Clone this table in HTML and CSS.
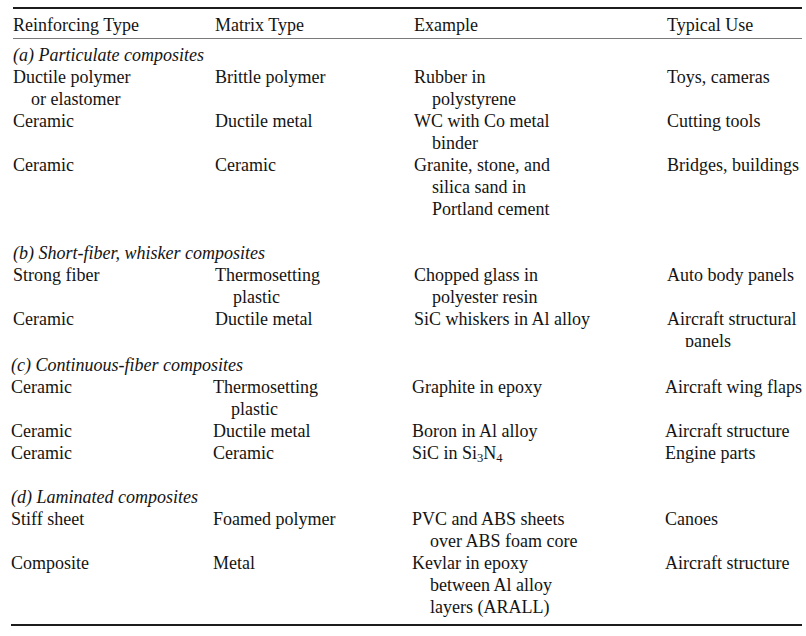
FILE: index.html
```html
<!DOCTYPE html>
<html>
<head>
<meta charset="utf-8">
<link rel="stylesheet" href="styles.css">
</head>
<body>
<div class="table">
  <div class="rule-thick"></div>
  <div class="row head">
    <div>Reinforcing Type</div>
    <div>Matrix Type</div>
    <div>Example</div>
    <div>Typical Use</div>
  </div>
  <div class="rule-thin"></div>

  <div class="section sec-a">
    <div class="title">(a) Particulate composites</div>
    <div class="row">
      <div class="cell">Ductile polymer<br>or elastomer</div>
      <div class="cell">Brittle polymer</div>
      <div class="cell">Rubber in<br>polystyrene</div>
      <div class="cell">Toys, cameras</div>
    </div>
    <div class="row">
      <div class="cell">Ceramic</div>
      <div class="cell">Ductile metal</div>
      <div class="cell">WC with Co metal<br>binder</div>
      <div class="cell">Cutting tools</div>
    </div>
    <div class="row">
      <div class="cell">Ceramic</div>
      <div class="cell">Ceramic</div>
      <div class="cell">Granite, stone, and<br>silica sand in<br>Portland cement</div>
      <div class="cell">Bridges, buildings</div>
    </div>
  </div>

  <div class="section sec-b">
    <div class="title">(b) Short-fiber, whisker composites</div>
    <div class="row">
      <div class="cell">Strong fiber</div>
      <div class="cell">Thermosetting<br>plastic</div>
      <div class="cell">Chopped glass in<br>polyester resin</div>
      <div class="cell">Auto body panels</div>
    </div>
    <div class="row clip">
      <div class="cell">Ceramic</div>
      <div class="cell">Ductile metal</div>
      <div class="cell">SiC whiskers in Al alloy</div>
      <div class="cell">Aircraft structural<br>panels</div>
    </div>
  </div>

  <div class="section sec-c shift">
    <div class="title">(c) Continuous-fiber composites</div>
    <div class="row">
      <div class="cell">Ceramic</div>
      <div class="cell">Thermosetting<br>plastic</div>
      <div class="cell">Graphite in epoxy</div>
      <div class="cell">Aircraft wing flaps</div>
    </div>
    <div class="row">
      <div class="cell">Ceramic</div>
      <div class="cell">Ductile metal</div>
      <div class="cell">Boron in Al alloy</div>
      <div class="cell">Aircraft structure</div>
    </div>
    <div class="row">
      <div class="cell">Ceramic</div>
      <div class="cell">Ceramic</div>
      <div class="cell">SiC in Si<sub>3</sub>N<sub>4</sub></div>
      <div class="cell">Engine parts</div>
    </div>
  </div>

  <div class="section sec-d shift">
    <div class="title">(d) Laminated composites</div>
    <div class="row">
      <div class="cell">Stiff sheet</div>
      <div class="cell">Foamed polymer</div>
      <div class="cell">PVC and ABS sheets<br>over ABS foam core</div>
      <div class="cell">Canoes</div>
    </div>
    <div class="row">
      <div class="cell">Composite</div>
      <div class="cell">Metal</div>
      <div class="cell">Kevlar in epoxy<br>between Al alloy<br>layers (ARALL)</div>
      <div class="cell">Aircraft structure</div>
    </div>
  </div>

  <div class="rule-thick rule-bottom shift"></div>
</div>
</body>
</html>
```

FILE: styles.css
```css
html, body {
  margin: 0;
  padding: 0;
  background: #ffffff;
}

body {
  color: #141414;
  font-family: "Liberation Serif", "Times New Roman", serif;
  font-size: 18px;
  line-height: 22px;
}

.table {
  padding: 7px 4px 0 13px;
  width: 789px;
}

.rule-thick {
  height: 2px;
  background-color: #1c1c1c;
}

.rule-thin {
  height: 1px;
  background-color: #7a7a7a;
}

.row {
  display: grid;
  grid-template-columns: 202px 199px 253px 1fr;
}

.head {
  padding: 5px 0 2px;
}

.section {
  padding-top: 5px;
}

.title {
  font-style: italic;
}

.cell {
  padding-left: 18px;
  text-indent: -18px;
}

.sec-b {
  padding-top: 22px;
}

.clip {
  height: 39px;
  overflow: hidden;
}

.sec-c {
  padding-top: 7px;
}

.sec-d {
  padding-top: 22px;
}

.shift {
  margin-left: -2px;
}

sub {
  font-size: 70%;
  line-height: 0;
  vertical-align: -3px;
}

.rule-bottom {
  margin-top: 6px;
}
```
